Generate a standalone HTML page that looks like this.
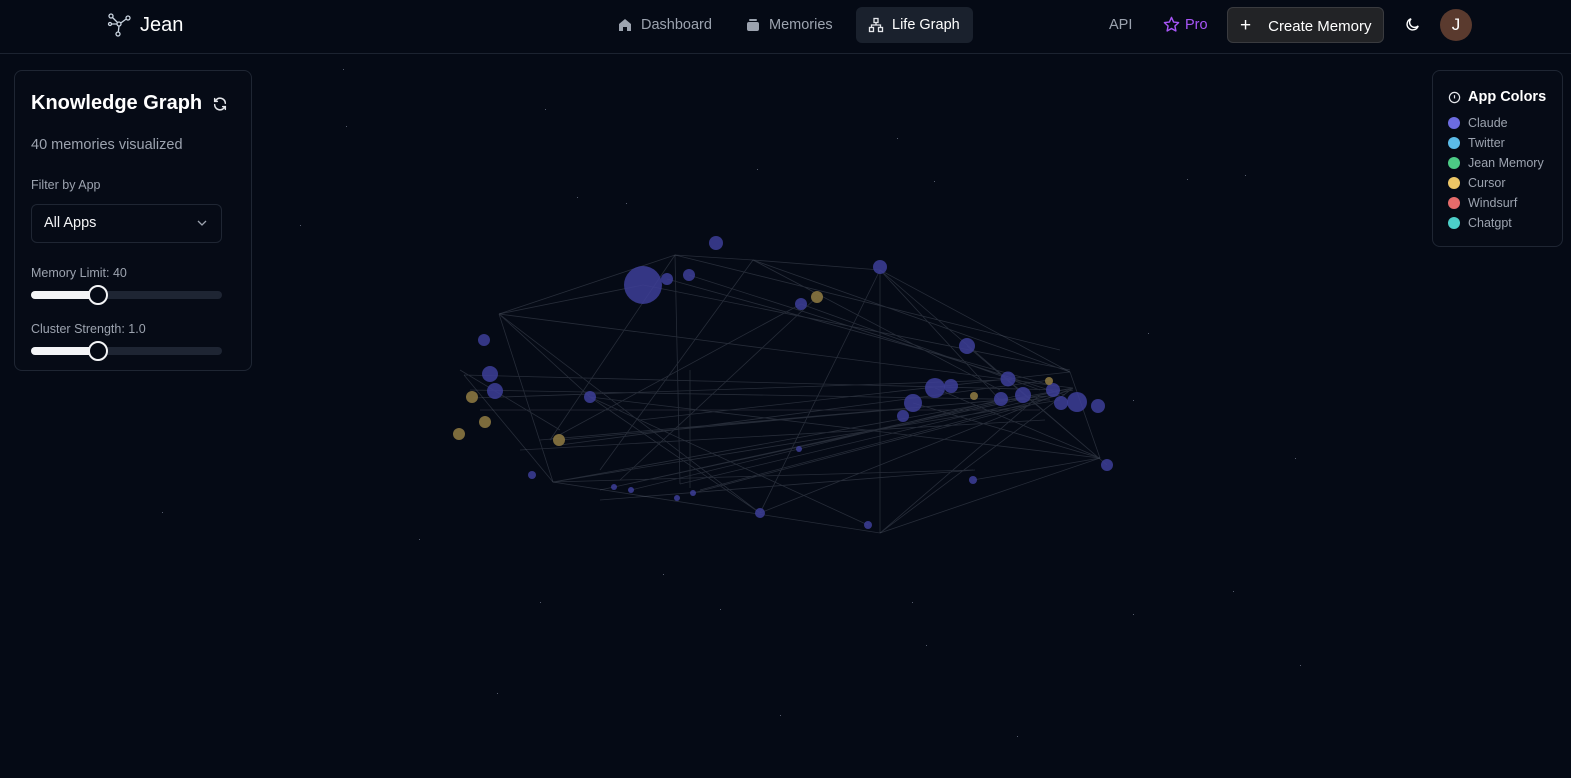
<!DOCTYPE html>
<html><head><meta charset="utf-8"><style>
*{box-sizing:border-box;margin:0;padding:0}
body{width:1571px;height:778px;background:#050a15;font-family:"Liberation Sans",sans-serif;color:#e5e7eb;position:relative;overflow:hidden}
.hdr{position:absolute;left:0;top:0;width:1571px;height:54px;border-bottom:1px solid #1c2330}
.abs{position:absolute}
.nav{font-size:14.5px;color:#9ca3af;display:flex;align-items:center;gap:8px}
.card{position:absolute;border:1px solid #1f2633;border-radius:8px;background:#060b16}
.dot{width:12px;height:12px;border-radius:50%;display:inline-block;margin-right:8px;vertical-align:-2px}
.leg div{font-size:12.5px;color:#9ca3af;height:20px}
.track{position:absolute;left:31px;width:191px;height:8px;border-radius:4px;background:#1e2533}
.fill{height:8px;border-radius:4px;background:#f3f4f6;width:66px}
.thumb{position:absolute;left:57px;top:-6px;width:20px;height:20px;border-radius:50%;background:#050a15;border:2px solid #f3f4f6}
</style></head><body>
<div class="hdr">
 <svg class="abs" style="left:107px;top:13px" width="26" height="24" viewBox="0 0 26 24" fill="none" stroke="#cbd5e1" stroke-width="1.3"><circle cx="12" cy="11" r="2"/><circle cx="4" cy="3" r="2"/><circle cx="21" cy="5" r="2"/><circle cx="11" cy="21" r="2"/><circle cx="3" cy="11" r="1.5"/><path d="M10.5 9.5L5.5 4.5M13.8 10L19.2 6M12 13L11.3 19M10 11H4.5"/></svg>
 <div class="abs" style="left:140px;top:14px;font-size:20px;color:#fff">Jean</div>
 <div class="abs nav" style="left:617px;top:17px"><svg width="16" height="16" viewBox="0 0 16 16"><path d="M2 7L8 2l6 5v7H10v-4H6v4H2z" fill="#9ca3af"/></svg>Dashboard</div>
 <div class="abs nav" style="left:745px;top:17px"><svg width="16" height="16" viewBox="0 0 16 16"><rect x="2" y="5" width="12" height="9" rx="2" fill="#9ca3af"/><rect x="4" y="2" width="8" height="2" rx="1" fill="#9ca3af"/></svg>Memories</div>
 <div class="abs" style="left:856px;top:7px;width:117px;height:36px;background:#1a212d;border-radius:6px"></div>
 <div class="abs nav" style="left:868px;top:17px;color:#fff"><svg width="16" height="16" viewBox="0 0 16 16" fill="none" stroke="#e5e7eb" stroke-width="1.3"><rect x="6" y="1.5" width="4" height="4"/><rect x="1.5" y="10.5" width="4" height="4"/><rect x="10.5" y="10.5" width="4" height="4"/><path d="M8 5.5V8M3.5 10.5V8h9v2.5"/></svg>Life Graph</div>
 <div class="abs nav" style="left:1109px;top:17px">API</div>
 <div class="abs nav" style="left:1163px;top:16px;color:#a855f7;gap:5px"><svg width="17" height="17" viewBox="0 0 24 24" fill="none" stroke="#a855f7" stroke-width="2" stroke-linejoin="round"><path d="M12 2l3 6.5 7 .8-5.2 4.8 1.4 7L12 17.6 5.8 21.1l1.4-7L2 9.3l7-.8z"/></svg>Pro</div>
 <div class="abs" style="left:1227px;top:7px;width:157px;height:36px;background:#222326;border:1px solid #3a3b3f;border-radius:6px"></div>
 <div class="abs nav" style="left:1240px;top:15px;color:#fff;font-size:15px;gap:17px"><span style="font-size:19px;font-weight:300">+</span>Create Memory</div>
 <svg class="abs" style="left:1404px;top:16px" width="17" height="17" viewBox="0 0 24 24" fill="none" stroke="#fff" stroke-width="2"><path d="M20 14A8 8 0 1 1 10 4a6 6 0 0 0 10 10z"/></svg>
 <div class="abs" style="left:1440px;top:9px;width:32px;height:32px;border-radius:50%;background:#5a3a2e;color:#fff;font-size:17px;text-align:center;line-height:32px">J</div>
</div>

<svg class="abs" style="left:0;top:55px" width="1571" height="723">
<g fill="#8a93a6" opacity=".6">
<rect x="343" y="14" width="1" height="1"/><rect x="545" y="54" width="1" height="1"/><rect x="346" y="71" width="1" height="1"/><rect x="757" y="114" width="1" height="1"/><rect x="934" y="126" width="1" height="1"/><rect x="1187" y="124" width="1" height="1"/><rect x="1245" y="120" width="1" height="1"/><rect x="577" y="142" width="1" height="1"/><rect x="626" y="148" width="1" height="1"/><rect x="300" y="170" width="1" height="1"/><rect x="897" y="83" width="1" height="1"/><rect x="1148" y="278" width="1" height="1"/><rect x="1133" y="345" width="1" height="1"/><rect x="1295" y="403" width="1" height="1"/><rect x="162" y="457" width="1" height="1"/><rect x="419" y="484" width="1" height="1"/><rect x="663" y="519" width="1" height="1"/><rect x="540" y="547" width="1" height="1"/><rect x="720" y="554" width="1" height="1"/><rect x="912" y="547" width="1" height="1"/><rect x="1133" y="559" width="1" height="1"/><rect x="1233" y="536" width="1" height="1"/><rect x="1017" y="681" width="1" height="1"/><rect x="497" y="638" width="1" height="1"/><rect x="1300" y="610" width="1" height="1"/><rect x="780" y="660" width="1" height="1"/><rect x="926" y="590" width="1" height="1"/></g>
</svg>

<svg class="abs" style="left:0;top:0" width="1571" height="778">
<g stroke="#8b93a5" stroke-opacity=".25" stroke-width="0.8" fill="none">
<path d="M499 314L675 255L753 260L880 270L1070 372L1100 458L880 533L553 482L464 375"/>
<path d="M499 314L643 285M499 314L590 397M499 314L553 482M499 314L760 513M499 314L1073 388M675 255L680 484M675 255L550 440M675 255L1060 350M753 260L1070 372M753 260L600 470M753 260L1000 390M880 270L880 533M880 270L760 513M880 270L1000 400M880 270L1107 465M643 285L1070 370M667 279L1050 385M689 275L1065 395M801 304L1040 390M801 304L550 440M817 297L620 480M1073 388L553 482M1073 388L600 490M1073 388L760 513M1073 388L880 533M1060 395L700 490M1050 380L560 445M1100 458L590 397M1100 458L973 480M1040 395L880 533M464 375L1060 390M470 390L1050 400M480 410L1040 410M560 440L1000 400M473 398L1000 380M590 397L760 513M590 397L868 525M553 482L973 470M553 482L1060 400M680 484L1073 390M614 487L1010 400M631 490L1020 395M693 493L1030 405M540 440L1060 395M690 488L690 370M967 346L1107 465M913 403L1100 458M935 388L1100 458M520 450L1045 420M460 370L560 430M600 500L975 470M1070 372L640 420"/>
</g>
<g fill="#3d3e98" fill-opacity=".85">
<circle cx="643" cy="285" r="19"/><circle cx="667" cy="279" r="6"/><circle cx="689" cy="275" r="6"/><circle cx="716" cy="243" r="7"/><circle cx="801" cy="304" r="6"/><circle cx="880" cy="267" r="7"/><circle cx="967" cy="346" r="8"/><circle cx="1008" cy="379" r="7.5"/><circle cx="935" cy="388" r="10"/><circle cx="951" cy="386" r="7"/><circle cx="913" cy="403" r="9"/><circle cx="903" cy="416" r="6"/><circle cx="1001" cy="399" r="7"/><circle cx="1023" cy="395" r="8"/><circle cx="1053" cy="390" r="7"/><circle cx="1061" cy="403" r="7"/><circle cx="1077" cy="402" r="10"/><circle cx="1098" cy="406" r="7"/><circle cx="1107" cy="465" r="6"/><circle cx="973" cy="480" r="4"/><circle cx="868" cy="525" r="4"/><circle cx="760" cy="513" r="5"/><circle cx="799" cy="449" r="3"/><circle cx="693" cy="493" r="3"/><circle cx="677" cy="498" r="3"/><circle cx="631" cy="490" r="3"/><circle cx="614" cy="487" r="3"/><circle cx="532" cy="475" r="4"/><circle cx="590" cy="397" r="6"/><circle cx="484" cy="340" r="6"/><circle cx="490" cy="374" r="8"/><circle cx="495" cy="391" r="8"/>
</g>
<g fill="#8a7540" fill-opacity=".9">
<circle cx="817" cy="297" r="6"/><circle cx="1049" cy="381" r="4"/><circle cx="974" cy="396" r="4"/><circle cx="559" cy="440" r="6"/><circle cx="472" cy="397" r="6"/><circle cx="485" cy="422" r="6"/><circle cx="459" cy="434" r="6"/>
</g>
</svg>

<div class="card" style="left:14px;top:70px;width:238px;height:301px">
 <div class="abs" style="left:16px;top:21px;font-size:20px;font-weight:bold;color:#fff">Knowledge Graph</div>
 <svg class="abs" style="left:197px;top:25px" width="16" height="16" viewBox="0 0 24 24" fill="none" stroke="#e5e7eb" stroke-width="2.2" stroke-linecap="round"><path d="M20 11a8 8 0 0 0-14-5L4 8M4 4v4h4M4 13a8 8 0 0 0 14 5l2-2M20 20v-4h-4"/></svg>
 <div class="abs" style="left:16px;top:66px;font-size:14.5px;color:#9ca3af">40 memories visualized</div>
 <div class="abs" style="left:16px;top:107px;font-size:12.5px;color:#9ca3af">Filter by App</div>
 <div class="abs" style="left:16px;top:133px;width:191px;height:39px;border:1px solid #1f2633;border-radius:6px"></div>
 <div class="abs" style="left:29px;top:144px;font-size:14.5px;color:#f3f4f6">All Apps</div>
 <svg class="abs" style="left:181px;top:147px" width="12" height="10" viewBox="0 0 12 10" fill="none" stroke="#9ca3af" stroke-width="1.3"><path d="M2 3l4 4 4-4"/></svg>
 <div class="abs" style="left:16px;top:195px;font-size:12.5px;color:#9ca3af">Memory Limit: 40</div>
 <div class="track" style="left:16px;top:220px"><div class="fill"></div><div class="thumb"></div></div>
 <div class="abs" style="left:16px;top:251px;font-size:12.5px;color:#9ca3af">Cluster Strength: 1.0</div>
 <div class="track" style="left:16px;top:276px"><div class="fill"></div><div class="thumb"></div></div>
</div>

<div class="card" style="left:1432px;top:70px;width:131px;height:177px">
 <svg class="abs" style="left:15px;top:20px" width="13" height="13" viewBox="0 0 14 14" fill="none" stroke="#e5e7eb" stroke-width="1.3"><circle cx="7" cy="7" r="5.5"/><path d="M7 4.5v3.5"/></svg>
 <div class="abs" style="left:35px;top:18px;font-size:14.5px;font-weight:bold;color:#fff">App Colors</div>
 <div class="abs leg" style="left:15px;top:45px">
  <div><span class="dot" style="background:#6c6ce0"></span>Claude</div>
  <div><span class="dot" style="background:#5bbbe8"></span>Twitter</div>
  <div><span class="dot" style="background:#4ccb85"></span>Jean Memory</div>
  <div><span class="dot" style="background:#ecc666"></span>Cursor</div>
  <div><span class="dot" style="background:#e56b6b"></span>Windsurf</div>
  <div><span class="dot" style="background:#4ccfc9"></span>Chatgpt</div>
 </div>
</div>
</body></html>
